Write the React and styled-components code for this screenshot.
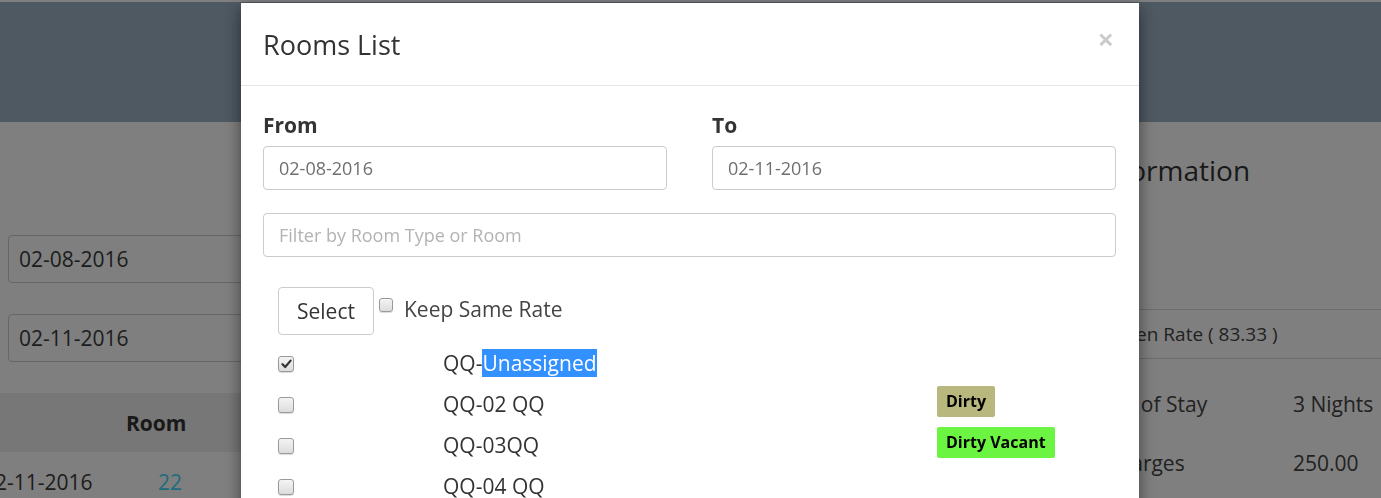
import React from 'react';
import styled, { createGlobalStyle } from 'styled-components';

// -------------- CSS -----------------

const Global = createGlobalStyle`
    html, body {
        margin: 0;
        padding: 0;
        width: 1381px;
        height: 498px;
        overflow: hidden;
        font-family: "Open Sans", "Liberation Sans", sans-serif;
        color: #333;
    }
`;

const Page = styled.div`
    width: 1381px;
    height: 498px;
    padding-top: 2px;
    background: #fff;
    box-sizing: border-box;
    overflow: hidden;
`;

const TopBar = styled.div`
    height: 120px;
    background: #9eb2c4;
`;

const Main = styled.div`
    display: flex;
    flex-direction: row;
`;

const LeftCol = styled.div`
    flex: 0 0 600px;
    padding-top: 113px;
    display: flex;
    flex-direction: column;
    gap: 31px;
`;

const PageInput = styled.div`
    margin-left: 8px;
    height: 48px;
    box-sizing: border-box;
    border: 1px solid #ccc;
    border-radius: 4px;
    padding: 0 10px;
    display: flex;
    align-items: center;
    font-size: 21px;
    color: #3a3a3a;
`;

const StayTable = styled.div`
    margin-left: -17px;
    display: grid;
    grid-template-columns: 135px 1fr;
    grid-auto-rows: 59px;
`;

const HeadCell = styled.div`
    background: #eee;
    display: flex;
    align-items: center;
    padding-left: ${p => p.$pad || 0}px;
    font-size: 21px;
    font-weight: 700;
    color: #333;
`;

const BodyCell = styled.div`
    display: flex;
    align-items: center;
    padding-left: ${p => p.$pad || 0}px;
    font-size: 21px;
    color: ${p => p.$link ? '#3ad8fa' : '#3a3a3a'};
`;

const RightCol = styled.div`
    margin-left: auto;
    width: 351px;
    padding-top: 29px;
`;

const InfoTitle = styled.h3`
    margin: 0 0 120px -19px;
    font-size: 28px;
    line-height: 38px;
    font-weight: 400;
    white-space: nowrap;
    color: #333;
`;

const RateRow = styled.div`
    height: 50px;
    box-sizing: border-box;
    border-top: 1px solid #d8d8d8;
    border-bottom: 1px solid #d8d8d8;
    display: flex;
    align-items: center;
    padding-left: ${p => p.$pad}px;
    font-size: 19px;
    color: #444;
`;

const InfoGrid = styled.div`
    margin-top: 15px;
    display: grid;
    grid-template-columns: 263px 1fr;
    grid-auto-rows: 59px;
    align-items: center;
    font-size: 21px;
    color: #444;
`;

const InfoLabel = styled.span`
    padding-left: ${p => p.$pad}px;
    white-space: nowrap;
`;

const Backdrop = styled.div`
    position: fixed;
    inset: 0;
    background: rgba(0, 0, 0, .5);
    display: flex;
    justify-content: flex-start;
    align-items: flex-start;
    padding: 3px 0 0 241px;
`;

const Modal = styled.div`
    width: 898px;
    background: #fff;
    box-shadow: 0 5px 15px rgba(0, 0, 0, .5);
`;

const ModalHeader = styled.div`
    display: flex;
    justify-content: space-between;
    align-items: flex-start;
    padding: 23px 23px 21px 22px;
    border-bottom: 1px solid #e5e5e5;
`;

const Title = styled.h4`
    margin: 0;
    font-size: 27px;
    line-height: 38px;
    font-weight: 400;
    color: #333;
`;

const Close = styled.span`
    margin-top: -4px;
    margin-right: 2px;
    font-size: 29px;
    font-weight: 700;
    line-height: 34px;
    color: #000;
    opacity: .2;
`;

const ModalBody = styled.div`
    padding: 25px 23px 0 22px;
`;

const DateGrid = styled.div`
    display: grid;
    grid-template-columns: 1fr 1fr;
    column-gap: 45px;
`;

const Field = styled.div`
    display: flex;
    flex-direction: column;
    gap: 7px;
`;

const Label = styled.label`
    font-size: 21px;
    line-height: 28px;
    font-weight: 700;
    color: #333;
`;

const TextBox = styled.div`
    height: 44px;
    box-sizing: border-box;
    border: 1px solid #ccc;
    border-radius: 4px;
    padding: 0 15px;
    display: flex;
    align-items: center;
    font-size: 18px;
    color: ${p => p.$placeholder ? '#b3b3b3' : '#6f6f6f'};
`;

const FilterBox = styled(TextBox)`
    margin-top: 23px;
`;

const Toolbar = styled.div`
    margin-top: 30px;
    padding-left: 15px;
    display: flex;
    align-items: flex-start;
`;

const SelectButton = styled.button`
    width: 96px;
    height: 48px;
    padding: 0;
    background: #fff;
    border: 1px solid #ccc;
    border-radius: 4px;
    font-family: inherit;
    font-size: 21px;
    color: #333;
`;

const KeepRate = styled.label`
    margin-left: 5px;
    display: flex;
    align-items: flex-start;
    gap: 11px;
    font-size: 21px;
    line-height: 28px;
    color: #444;
    padding-top: 8px;
`;

const Box = styled.span`
    flex: none;
    width: ${p => p.$size}px;
    height: ${p => p.$size}px;
    margin-top: ${p => p.$top || 0}px;
    box-sizing: border-box;
    border: 1px solid #9a9a9a;
    border-radius: 3px;
    background: linear-gradient(#f4f4f4, #dcdcdc);
    box-shadow: 0 1px 1px rgba(0, 0, 0, .15);
    display: flex;
    align-items: center;
    justify-content: center;
`;

const RoomList = styled.div`
    margin-top: 8px;
    display: grid;
    grid-template-columns: 180px 494px 1fr;
    grid-auto-rows: 41px;
    align-items: center;
`;

const CheckCell = styled.div`
    padding-left: 15px;
`;

const RoomName = styled.div`
    font-size: 21px;
    line-height: 27px;
    white-space: nowrap;
    color: #333;
`;

const Highlight = styled.span`
    background: #3390ff;
    color: #fff;
`;

const Badge = styled.span`
    justify-self: start;
    margin-bottom: 7px;
    padding: 4px 9px;
    border-radius: 2px;
    font-size: 16px;
    line-height: 23px;
    font-weight: 700;
    color: #000;
    background: ${p => p.$bg};
`;

// -------------- DATA -----------------

const rooms = [
    { id: 1, prefix: 'QQ-', name: 'Unassigned', checked: true },
    { id: 2, prefix: 'QQ-', name: '02 QQ', badge: 'Dirty', color: '#b8b77e' },
    { id: 3, prefix: 'QQ-', name: '03QQ', badge: 'Dirty Vacant', color: '#6bf442' },
    { id: 4, prefix: 'QQ-', name: '04 QQ' },
    { id: 5, prefix: 'QQ-', name: '05 QQ' }
];

// -------------- COMPONENT -----------------

function CheckBox({ size, checked, top }) {
    return (
        <Box $size={size} $top={top}>
            {checked && (
                <svg width="11" height="10" viewBox="0 0 11 10">
                    <path d="M1.5 5.2 L4.2 8 L9.6 1.6" fill="none" stroke="#333" strokeWidth="2.2" strokeLinecap="round" strokeLinejoin="round" />
                </svg>
            )}
        </Box>
    );
}

export default function App() {
    return (
        <>
            <Global />
            <Page>
                <TopBar />
                <Main>
                    <LeftCol>
                        <PageInput>02-08-2016</PageInput>
                        <PageInput>02-11-2016</PageInput>
                        <StayTable>
                            <HeadCell />
                            <HeadCell $pad={8}>Room</HeadCell>
                            <BodyCell>02-11-2016</BodyCell>
                            <BodyCell $pad={40} $link>22</BodyCell>
                        </StayTable>
                    </LeftCol>
                    <RightCol>
                        <InfoTitle>Guest Information</InfoTitle>
                        <RateRow $pad={62}>Chosen Rate ( 83.33 )</RateRow>
                        <InfoGrid>
                            <InfoLabel $pad={38}>Length of Stay</InfoLabel>
                            <span>3 Nights</span>
                            <InfoLabel $pad={21}>Total Charges</InfoLabel>
                            <span>250.00</span>
                        </InfoGrid>
                    </RightCol>
                </Main>
            </Page>
            <Backdrop>
                <Modal>
                    <ModalHeader>
                        <Title>Rooms List</Title>
                        <Close>&times;</Close>
                    </ModalHeader>
                    <ModalBody>
                        <DateGrid>
                            <Field>
                                <Label>From</Label>
                                <TextBox>02-08-2016</TextBox>
                            </Field>
                            <Field>
                                <Label>To</Label>
                                <TextBox>02-11-2016</TextBox>
                            </Field>
                        </DateGrid>
                        <FilterBox $placeholder>Filter by Room Type or Room</FilterBox>
                        <Toolbar>
                            <SelectButton>Select</SelectButton>
                            <KeepRate>
                                <CheckBox size={14} top={3} />
                                Keep Same Rate
                            </KeepRate>
                        </Toolbar>
                        <RoomList>
                            {rooms.map(room => (
                                <React.Fragment key={room.id}>
                                    <CheckCell><CheckBox size={16} checked={room.checked} /></CheckCell>
                                    <RoomName>
                                        {room.prefix}
                                        {room.checked ? <Highlight>{room.name}</Highlight> : room.name}
                                    </RoomName>
                                    {room.badge ? <Badge $bg={room.color}>{room.badge}</Badge> : <span />}
                                </React.Fragment>
                            ))}
                        </RoomList>
                    </ModalBody>
                </Modal>
            </Backdrop>
        </>
    );
}
